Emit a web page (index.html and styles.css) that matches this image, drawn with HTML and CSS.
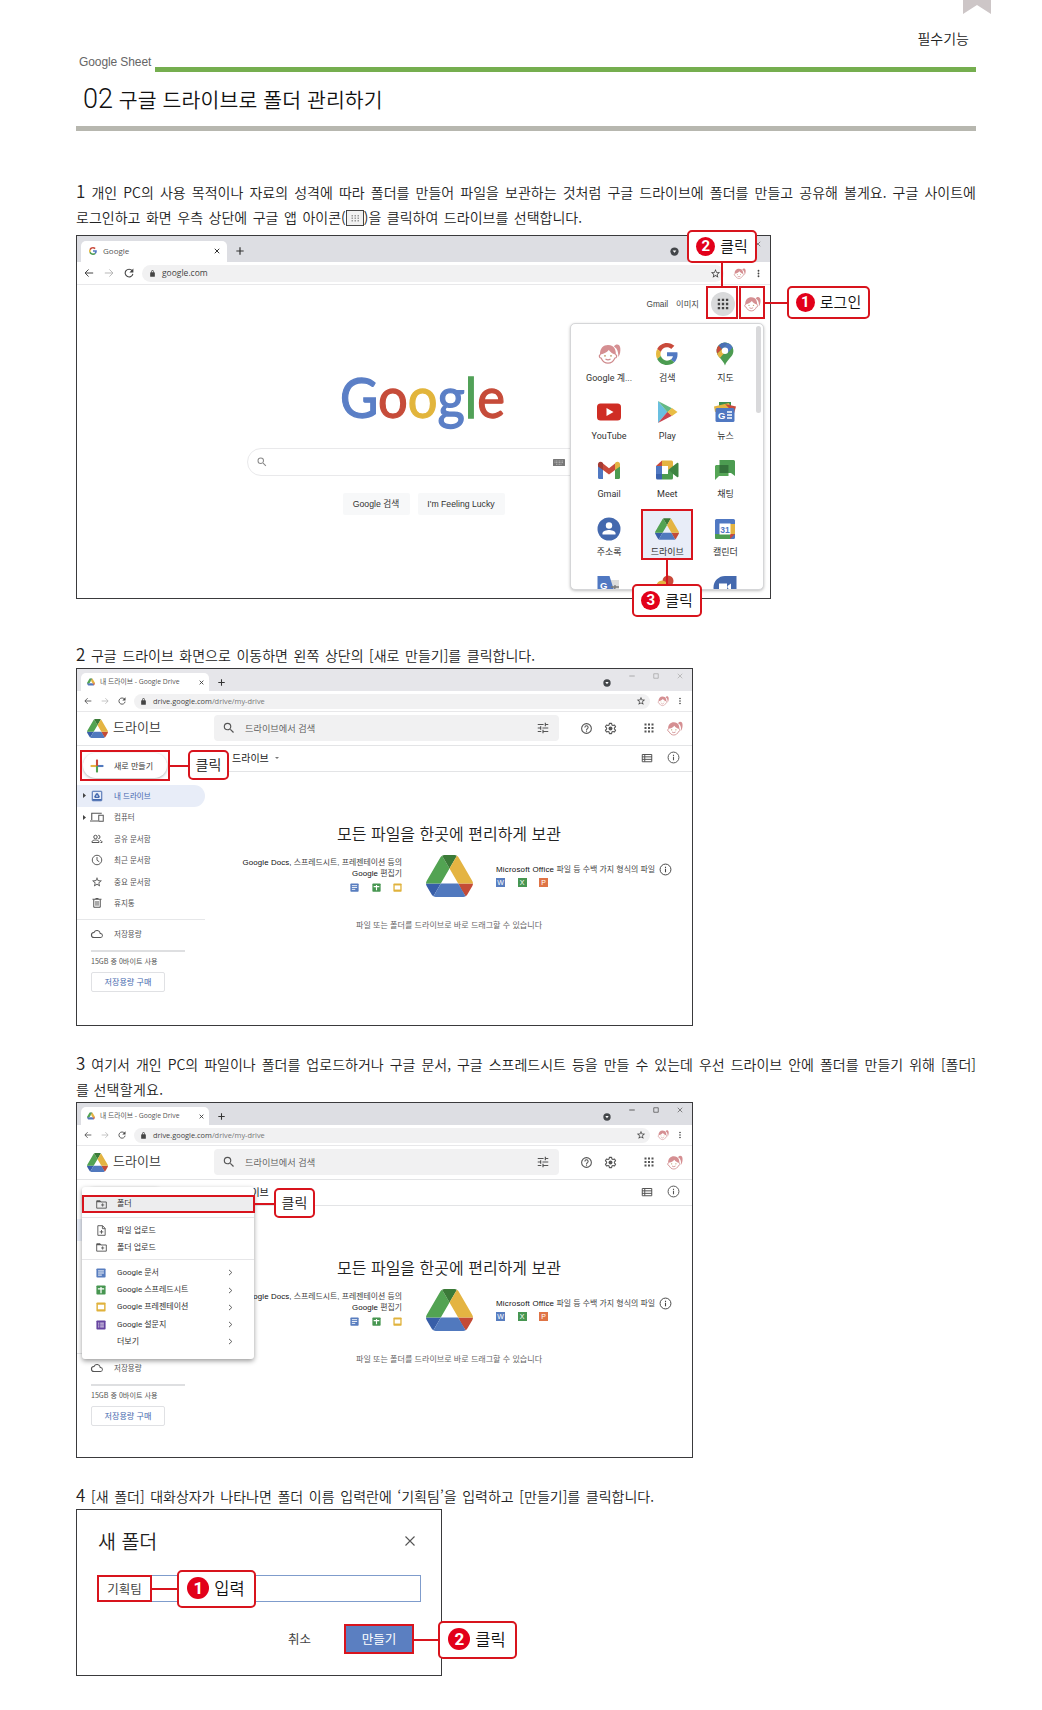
FILE: index.html
```html
<!DOCTYPE html>
<html lang="ko">
<head>
<meta charset="utf-8">
<title>02 구글 드라이브로 폴더 관리하기</title>
<link rel="stylesheet" href="styles.css">
</head>
<body>
<svg class="sprite" width="0" height="0" aria-hidden="true">
  <symbol id="back" viewBox="0 0 24 24"><path d="M22 12H3M11 3.500L2.500 12l8.500 8.500" fill="none" stroke="currentColor" stroke-width="2.400"/></symbol>
  <symbol id="fwd" viewBox="0 0 24 24"><path d="M2 12h19M13 3.500l8.500 8.500-8.500 8.500" fill="none" stroke="currentColor" stroke-width="2"/></symbol>
  <symbol id="reload" viewBox="0 0 24 24"><path d="M19.500 6.500A9.300 9.300 0 1 0 21.300 14" fill="none" stroke="currentColor" stroke-width="2.600"/><path d="M22.500 1v9.500H13z" fill="currentColor"/></symbol>
  <symbol id="lock" viewBox="0 0 24 24"><path d="M18 8h-1V6c0-2.760-2.240-5-5-5S7 3.240 7 6v2H6a2 2 0 0 0-2 2v11a2 2 0 0 0 2 2h12a2 2 0 0 0 2-2V10a2 2 0 0 0-2-2zM9 6a3 3 0 0 1 6 0v2H9z" fill="currentColor"/></symbol>
  <symbol id="star" viewBox="0 0 24 24"><path d="M22 9.240l-7.190-.62L12 2 9.190 8.630 2 9.240l5.460 4.730L5.820 21 12 17.270 18.180 21l-1.630-7.030L22 9.240zM12 15.400l-3.760 2.270 1-4.280-3.320-2.880 4.380-.38L12 6.100l1.710 4.040 4.380.38-3.320 2.880 1 4.280L12 15.400z" fill="currentColor"/></symbol>
  <symbol id="dots" viewBox="0 0 24 24"><path d="M12 8a2 2 0 1 0 0-4 2 2 0 0 0 0 4zm0 6a2 2 0 1 0 0-4 2 2 0 0 0 0 4zm0 6a2 2 0 1 0 0-4 2 2 0 0 0 0 4z" fill="currentColor"/></symbol>
  <symbol id="x" viewBox="0 0 24 24"><path d="M3 3l18 18M21 3L3 21" fill="none" stroke="currentColor" stroke-width="4"/></symbol>
  <symbol id="thinx" viewBox="0 0 24 24"><path d="M3 3l18 18M21 3L3 21" fill="none" stroke="currentColor" stroke-width="2.200"/></symbol>
  <symbol id="plus" viewBox="0 0 24 24"><path d="M12 1v22M1 12h22" fill="none" stroke="currentColor" stroke-width="3.600"/></symbol>
  <symbol id="min" viewBox="0 0 24 24"><path d="M1 12h22" stroke="currentColor" stroke-width="3"/></symbol>
  <symbol id="max" viewBox="0 0 24 24"><path d="M3 3h18v18H3z" fill="none" stroke="currentColor" stroke-width="2.500"/></symbol>
  <symbol id="incog" viewBox="0 0 24 24"><circle cx="12" cy="12" r="11" fill="#43464a"/><path d="M7 9h10l-5 6.500z" fill="#fff"/></symbol>
  <symbol id="search" viewBox="0 0 24 24"><path d="M15.500 14h-.79l-.28-.27A6.470 6.470 0 0 0 16 9.500 6.500 6.500 0 1 0 9.500 16c1.610 0 3.090-.59 4.230-1.570l.27.28v.79l5 4.990L20.490 19l-4.990-5zm-6 0a4.500 4.500 0 1 1 0-9 4.500 4.500 0 0 1 0 9z" fill="currentColor"/></symbol>
  <symbol id="tune" viewBox="0 0 24 24"><path d="M3 17v2h6v-2H3zM3 5v2h10V5H3zm10 16v-2h8v-2h-8v-2h-2v6h2zM7 9v2H3v2h4v2h2V9H7zm14 4v-2H11v2h10zm-6-4h2V7h4V5h-4V3h-2v6z" fill="currentColor"/></symbol>
  <symbol id="help" viewBox="0 0 24 24"><path d="M11 18h2v-2h-2v2zm1-16a10 10 0 1 0 0 20 10 10 0 0 0 0-20zm0 18a8 8 0 1 1 0-16 8 8 0 0 1 0 16zm0-14a4 4 0 0 0-4 4h2a2 2 0 1 1 4 0c0 2-3 1.750-3 5h2c0-2.250 3-2.500 3-5a4 4 0 0 0-4-4z" fill="currentColor"/></symbol>
  <symbol id="gear" viewBox="0 0 24 24"><path d="M10 2.500h4l.6 2.900 2 1.100 2.800-1 2 3.500-2.200 1.900v2.200l2.200 1.900-2 3.500-2.800-1-2 1.100-.6 2.900h-4l-.6-2.900-2-1.100-2.800 1-2-3.500 2.200-1.900v-2.200L2.600 9l2-3.500 2.800 1 2-1.100z" fill="none" stroke="currentColor" stroke-width="2" stroke-linejoin="round"/><circle cx="12" cy="12" r="3.600" fill="currentColor"/></symbol>
  <symbol id="grid" viewBox="0 0 24 24"><path d="M3 3h4v4H3zm7 0h4v4h-4zm7 0h4v4h-4zM3 10h4v4H3zm7 0h4v4h-4zm7 0h4v4h-4zM3 17h4v4H3zm7 0h4v4h-4zm7 0h4v4h-4z" fill="currentColor"/></symbol>
  <symbol id="list" viewBox="0 0 24 24"><path d="M2.500 5h19v14.500h-19zM2 9.700h20M2 14.700h20M7.500 5v14.500" fill="none" stroke="currentColor" stroke-width="2"/></symbol>
  <symbol id="info" viewBox="0 0 24 24"><circle cx="12" cy="12" r="10" fill="none" stroke="currentColor" stroke-width="1.800"/><path d="M11 10.500h2V17h-2zM11 7h2v2h-2z" fill="currentColor"/></symbol>
  <symbol id="girl" viewBox="0 0 24 24"><g fill="none" stroke="#cf8b8d" stroke-width="1.200"><path d="M3.800 12.500c-2 0-2.100 3.500.4 3.700C5.700 19.500 8 21.200 11 21.200s5.300-1.700 6.800-5c2.500-.2 2.400-3.700.4-3.700"/><path d="M8.500 17q2.500 1.800 5 0"/></g><path d="M3 12.500C2.800 6 6.500 3 11 3c3.500 0 5.500 1.500 6.500 3.300 1 2 1.500 4 1.300 6.500-3-.8-5.500-2.500-7-4.800-2 2.500-5.500 4-8.800 4.500z" fill="#d58f92"/><path d="M17 4.500c2-3 5.800-2.500 6.300 1.500.3 3-.1 6.500-2 9 .1-3.500-.4-6.500-2-8.500z" fill="#d58f92"/><circle cx="8" cy="13.800" r=".9" fill="#b96"/><circle cx="14" cy="13.800" r=".9" fill="#b96"/></symbol>
  <symbol id="g" viewBox="0 0 48 48"><path fill="#c94a3b" d="M24 9.500c3.540 0 6.710 1.220 9.210 3.600l6.850-6.850C35.900 2.380 30.470 0 24 0 14.620 0 6.510 5.380 2.560 13.220l7.980 6.190C12.430 13.720 17.740 9.500 24 9.500z"/><path fill="#5078c2" d="M46.980 24.550c0-1.570-.15-3.090-.38-4.550H24v9.020h12.940c-.58 2.960-2.260 5.480-4.780 7.180l7.730 6c4.510-4.180 7.090-10.360 7.090-17.650z"/><path fill="#e6b93f" d="M10.530 28.590c-.48-1.450-.76-2.990-.76-4.590s.27-3.140.76-4.590l-7.980-6.190C.92 16.460 0 20.120 0 24c0 3.880.92 7.540 2.560 10.780l7.970-6.190z"/><path fill="#4c9c51" d="M24 48c6.480 0 11.930-2.130 15.890-5.810l-7.730-6c-2.150 1.450-4.920 2.300-8.160 2.300-6.260 0-11.570-4.220-13.470-9.910l-7.980 6.190C6.510 42.620 14.620 48 24 48z"/></symbol>
  <symbol id="drive" viewBox="0 0 87.300 78"><path d="m6.600 66.850 3.850 6.650c.8 1.400 1.950 2.500 3.300 3.300l13.750-23.800h-27.500c0 1.550.4 3.100 1.200 4.500z" fill="#385ea8"/><path d="m43.650 25-13.750-23.800c-1.350.8-2.500 1.900-3.300 3.300l-25.400 44a9.060 9.060 0 0 0-1.200 4.500h27.500z" fill="#52a352"/><path d="m73.550 76.800c1.350-.8 2.500-1.900 3.300-3.300l1.600-2.750 7.650-13.250c.8-1.400 1.200-2.950 1.200-4.500h-27.500l5.850 11.500z" fill="#c44b37"/><path d="m43.650 25 13.750-23.800c-1.350-.8-2.900-1.200-4.500-1.200h-18.500c-1.600 0-3.150.45-4.500 1.200z" fill="#3b7a38"/><path d="m59.800 53h-32.300l-13.750 23.800c1.350.8 2.900 1.200 4.500 1.200h50.800c1.600 0 3.150-.45 4.500-1.200z" fill="#5179be"/><path d="m73.400 26.500-12.700-22c-.8-1.400-1.950-2.500-3.300-3.300l-13.750 23.800 16.150 28h27.450c0-1.550-.4-3.100-1.200-4.500z" fill="#e4b442"/></symbol>
  <symbol id="mydrive" viewBox="0 0 24 24"><rect x="2.500" y="2.500" width="19" height="19" rx="1" fill="none" stroke="currentColor" stroke-width="2"/><path d="M3 18h18v3H3z" fill="currentColor"/><path d="M10.200 6.500h3.600l4 6.800-1.700 2.700H7.900l-1.700-2.700z" fill="currentColor"/><circle cx="12" cy="12" r="1.700" fill="#e8edf8"/></symbol>
  <symbol id="computers" viewBox="0 0 28 24"><path d="M3.500 18V4.500h20M0 20h16" fill="none" stroke="currentColor" stroke-width="2.200"/><rect x="17.500" y="8.500" width="9" height="12" fill="none" stroke="currentColor" stroke-width="2"/></symbol>
  <symbol id="people" viewBox="0 0 24 24"><g fill="none" stroke="currentColor" stroke-width="2"><circle cx="9" cy="8" r="3.500"/><path d="M2 19v-1.500C2 15 6.500 14 9 14s7 1 7 3.500V19zM14.500 4.500a3.500 3.500 0 0 1 0 7M18 14.500c2 .7 4 1.800 4 3.500v1h-3"/></g></symbol>
  <symbol id="clock" viewBox="0 0 24 24"><circle cx="12" cy="12" r="9.500" fill="none" stroke="currentColor" stroke-width="1.900"/><path d="M12 6v6.500l4.500 3" fill="none" stroke="currentColor" stroke-width="1.900"/></symbol>
  <symbol id="trash" viewBox="0 0 24 24"><path d="M3 4.500h18M5.500 5v15.500h13V5M10 8v9.500M14 8v9.500" fill="none" stroke="currentColor" stroke-width="2"/><path d="M9 2h6v2H9z" fill="currentColor"/></symbol>
  <symbol id="cloud" viewBox="0 0 24 24"><path d="M19.350 10.040A7.490 7.490 0 0 0 5.350 8.040 5.990 5.990 0 0 0 6 20h13a5 5 0 0 0 .35-9.960zM19 18H6a4 4 0 0 1 0-8h.71a5.500 5.500 0 0 1 10.790 1.500v.5H19a3 3 0 0 1 0 6z" fill="currentColor"/></symbol>
  <symbol id="newplus" viewBox="0 0 24 24"><path d="M10.200 1h3.600v11h-3.600z" fill="#c94a3b"/><path d="M10.200 12h3.600v11h-3.600z" fill="#52a352"/><path d="M1 10.200h9.500v3.600H1z" fill="#e4b442"/><path d="M13.800 10.200H23v3.600h-9.200z" fill="#5179be"/></symbol>
  <symbol id="doc" viewBox="0 0 24 24"><rect x="1" y="1" width="22" height="22" rx="2" fill="#587dbf"/><path d="M5 7h14M5 12h14M5 17h9" stroke="#fff" stroke-width="2.300"/></symbol>
  <symbol id="sheet" viewBox="0 0 24 24"><rect x="1" y="1" width="22" height="22" rx="2" fill="#479651"/><path d="M4.500 9.500h15M12 5v14.500" stroke="#fff" stroke-width="3"/></symbol>
  <symbol id="slide" viewBox="0 0 24 24"><rect x="1" y="1" width="22" height="22" rx="2" fill="#e0b23c"/><path d="M4.500 6.500h15v11h-15z" fill="#fff"/></symbol>
  <symbol id="form" viewBox="0 0 24 24"><rect x="1" y="1" width="22" height="22" rx="2" fill="#6644a0"/><path d="M5 7.500h3M10 7.500h9M5 12h3M10 12h9M5 16.500h3M10 16.500h9" stroke="#fff" stroke-width="2"/></symbol>
  <symbol id="folder" viewBox="0 0 24 20"><path d="M1.500 3V18h21V4.500H11L9 2H1.500z" fill="none" stroke="currentColor" stroke-width="2"/><path d="M1.500 2h8l2 3h-10z" fill="currentColor"/><path d="M14.500 7.500v7M11 11h7" stroke="currentColor" stroke-width="1.900"/></symbol>
  <symbol id="file" viewBox="0 0 20 24"><path d="M2 1.500h10.500l5.500 6V22.500H2zM12 2v6h6M10 11v8M6 15h8" fill="none" stroke="currentColor" stroke-width="2"/></symbol>
  <symbol id="chev" viewBox="0 0 24 24"><path d="M8 5l7.500 7L8 19" fill="none" stroke="currentColor" stroke-width="2.500"/></symbol>
  <symbol id="tri" viewBox="0 0 10 10"><path d="M2 0l6 5-6 5z" fill="currentColor"/></symbol>
</svg>

<main class="page">
  <svg class="bookmark" viewBox="0 0 28 14"><path d="M0 0h28v14L14 5 0 14z" fill="#cdc6c7"/></svg>
  <header class="head">
    <div class="head-cat">필수기능</div>
    <div class="head-row"><span class="head-brand">Google Sheet</span><span class="head-bar"></span></div>
    <h1 class="title"><span class="title-num">02</span> 구글 드라이브로 폴더 관리하기</h1>
  </header>

  <section class="step step-1">
    <p class="line line-full"><b>1</b> 개인 PC의 사용 목적이나 자료의 성격에 따라 폴더를 만들어 파일을 보관하는 것처럼 구글 드라이브에 폴더를 만들고 공유해 볼게요. 구글 사이트에</p>
    <p class="line line-1b">로그인하고 화면 우측 상단에 구글 앱 아이콘(<svg class="inline-apps" viewBox="0 0 18 16"><rect x=".5" y=".5" width="17" height="15" fill="#f1f1f1" stroke="#444"/><path d="M5.500 5h1.500v1.500H5.500zm3 0H10v1.500H8.500zm3 0H13v1.500h-1.500zM5.500 7.500h1.500V9H5.500zm3 0H10V9H8.500zm3 0H13V9h-1.500zM5.500 10h1.500v1.500H5.500zm3 0H10v1.500H8.500zm3 0H13v1.500h-1.500z" fill="#999"/></svg>)을 클릭하여 드라이브를 선택합니다.</p>
    <div class="shot shot-google">
      <div class="tabs">
        <div class="tab"><svg class="i8"><use href="#g"/></svg><span class="tab-text">Google</span><svg class="i6"><use href="#x"/></svg></div>
        <svg class="i8 newtab"><use href="#plus"/></svg>
        <svg class="i9 incog"><use href="#incog"/></svg>
        <div class="winctl"><svg class="i6"><use href="#thinx"/></svg></div>
      </div>
      <div class="bar">
        <svg class="nav"><use href="#back"/></svg><svg class="nav dim"><use href="#fwd"/></svg><svg class="nav"><use href="#reload"/></svg>
        <div class="url"><svg class="lock"><use href="#lock"/></svg><span>google.com</span><svg class="urlstar"><use href="#star"/></svg></div>
        <svg class="face-s"><use href="#girl"/></svg><svg class="kebab"><use href="#dots"/></svg>
      </div>
      <div class="gpage">
        <div class="gtop"><span>Gmail</span><span>이미지</span><span class="appsbtn"><svg class="i14"><use href="#grid"/></svg></span><svg class="face-m"><use href="#girl"/></svg></div>
        <div class="gmain">
          <svg class="glogo" viewBox="0 0 170 66"><text x="1" y="47" textLength="165" lengthAdjust="spacingAndGlyphs"><tspan class="lb">G</tspan><tspan class="lr">o</tspan><tspan class="ly">o</tspan><tspan class="lb">g</tspan><tspan class="lg">l</tspan><tspan class="lr">e</tspan></text></svg>
          <div class="gsearch"><svg class="i12"><use href="#search"/></svg><svg class="kbd" viewBox="0 0 12 7"><rect width="12" height="7" rx=".5" fill="#777"/><path d="M1.500 2h9M1.500 3.600h9M3 5.300h6" stroke="#ccc" stroke-width=".7" stroke-dasharray="1 .5"/></svg></div>
          <div class="gbtns"><span>Google 검색</span><span>I'm Feeling Lucky</span></div>
        </div>
      </div>
      <div class="apps">
        <div class="apps-grid">
          <div class="app"><svg class="i24"><use href="#girl"/></svg><span>Google 계...</span></div>
          <div class="app"><svg class="i22"><use href="#g"/></svg><span>검색</span></div>
          <div class="app"><svg class="i24" viewBox="0 0 24 24"><path d="M12 .5c4.700 0 8.400 3.700 8.400 8.400 0 6-6.400 8-8.400 14.600-2-6.600-8.400-8.600-8.400-14.600C3.600 4.200 7.300.5 12 .5z" fill="#4c9c51"/><path d="M5.500 3.500A8.400 8.400 0 0 1 14.500.9L8.900 7.300z" fill="#4a6fb5"/><path d="M5.500 3.500a8.400 8.400 0 0 0-1.400 8.200l4.800-4.400z" fill="#c94a3b"/><path d="M4.100 11.700c.6 1.800 1.700 3 2.800 4.400l7.500-8.700-5.500-.1z" fill="#e4b442"/><path d="M14.500.9c2.500.8 4.300 2.500 5.200 4.700l-5.500 6L9 7.300z" fill="#5078c2"/><circle cx="12" cy="8.800" r="3.200" fill="#fff"/></svg><span>지도</span></div>
          <div class="app"><svg class="i24" viewBox="0 0 24 24"><rect y="3.500" width="24" height="17" rx="3.500" fill="#cf2d24"/><path d="M9.500 8l7 4-7 4z" fill="#fff"/></svg><span>YouTube</span></div>
          <div class="app"><svg class="i24" viewBox="0 0 24 24"><path d="M3 1v22l9.500-11z" fill="#69bfe0"/><path d="M3 1l14 7.300-4.500 4z" fill="#64b984"/><path d="M3 23l14-7.300-4.500-4z" fill="#c8434d"/><path d="M17 8.100l5.500 3.900-5.500 3.900-4.700-3.900z" fill="#e9bd45"/></svg><span>Play</span></div>
          <div class="app"><svg class="i24" viewBox="0 0 24 24"><path d="M6 2h12v6H6z" fill="#3f8e4d"/><path d="M1 6.500L16 3l2 6-16 3z" fill="#e4b442"/><path d="M12 4l11 2.500-2 7z" fill="#c94a3b"/><rect x="2.500" y="8" width="19" height="14" rx="1.500" fill="#5078c2"/><text x="5" y="18.500" class="icon-letter">G</text><path d="M14 12h5M14 15h5M14 18h5" stroke="#fff" stroke-width="1.500"/></svg><span>뉴스</span></div>
          <div class="app"><svg class="i24" viewBox="0 0 24 24"><path d="M1 7h5v14H2.500A1.500 1.500 0 0 1 1 19.500z" fill="#5078c2"/><path d="M18 7h5v12.500a1.500 1.500 0 0 1-1.500 1.500H18z" fill="#4c9c51"/><path d="M6 12V5.500l6 4.700 6-4.700V12l-6 4.500z" fill="#c94a3b"/><path d="M1 6.500C1 3.500 4 3 6 5v7L1 8.500z" fill="#a53a32"/><path d="M23 6.500c0-3-3-3.500-5-1.500v7l5-3.500z" fill="#e4b442"/></svg><span>Gmail</span></div>
          <div class="app"><svg class="i24" viewBox="0 0 24 24"><path d="M1 8l6-5.500V8z" fill="#c94a3b"/><path d="M7 2.500h9.500A1.500 1.500 0 0 1 18 4v5l-5 3V8H7z" fill="#e4b442"/><path d="M1 8h6v8H1z" fill="#5078c2"/><path d="M1 16h6v5.500H2.500A1.500 1.500 0 0 1 1 20z" fill="#3a62ad"/><path d="M7 16h6v-4l5 3v5a1.500 1.500 0 0 1-1.500 1.500H7z" fill="#4c9c51"/><path d="M13 12l9-7c.8-.5 1.500 0 1.500.7v12.600c0 .8-.8 1.200-1.500.7z" fill="#3d8442"/></svg><span>Meet</span></div>
          <div class="app"><svg class="i24" viewBox="0 0 24 24"><path d="M6.500 2h14A1.500 1.500 0 0 1 22 3.500V18l-4-3H6.500z" fill="#4c9c51"/><path d="M3 7h12.500v11H6l-4 4V8z" fill="#55a556"/><path d="M6.500 7h9v8h-9z" fill="#35733c"/></svg><span>채팅</span></div>
          <div class="app"><svg class="i24" viewBox="0 0 24 24"><circle cx="12" cy="12" r="11.500" fill="#4469ae"/><circle cx="12" cy="8.500" r="3.200" fill="#fff"/><path d="M5.500 17.500v-1.300c0-2.200 4.300-3.200 6.500-3.200s6.500 1 6.500 3.200v1.300z" fill="#fff"/></svg><span>주소록</span></div>
          <div class="app app-on"><svg class="i24"><use href="#drive"/></svg><span>드라이브</span></div>
          <div class="app"><svg class="i24" viewBox="0 0 24 24"><rect x="2" y="2" width="20" height="20" rx="1.500" fill="#5078c2"/><path d="M17 7h5v10h-5z" fill="#e4b442"/><path d="M2 17h15v5H3.500A1.500 1.500 0 0 1 2 20.500z" fill="#4c9c51"/><path d="M17 17h5l-5 5z" fill="#c94a3b"/><path d="M6.500 6.500h11v11h-11z" fill="#fff"/><text x="7.300" y="15.500" class="icon-num">31</text></svg><span>캘린더</span></div>
          <div class="app"><svg class="i24" viewBox="0 0 24 24"><path d="M10 5h12v19H10z" fill="#dcdcdc"/><path d="M.5 1h12l6 19H.5z" fill="#5078c2"/><text x="3" y="13.500" class="icon-letter">G</text><path d="M14 12h8M18 10v2c0 3-2 5-4 6" fill="none" stroke="#777" stroke-width="1.300"/></svg></div>
          <div class="app"><svg class="i24" viewBox="0 0 24 24"><circle cx="13" cy="6" r="5.500" fill="#c94a3b"/><circle cx="7" cy="11" r="5.500" fill="#e4b442"/></svg></div>
          <div class="app"><svg class="i24" viewBox="0 0 24 24"><path d="M12 1h11.500v13A10 10 0 0 1 12 24 11.500 11.500 0 0 1 12 1z" fill="#4469ae"/><path d="M6 8.500h8v7H6zM14.500 11l3.500-2.500v7L14.500 13z" fill="#fff"/></svg></div>
        </div>
        <span class="thumb"></span>
      </div>
      <span class="frame f-apps"></span><span class="frame f-face"></span><span class="frame f-drive"></span>
      <span class="wire w-2"></span><span class="wire w-1"></span><span class="wire w-3"></span>
      <span class="note n-2"><i>2</i>클릭</span>
      <span class="note n-1"><i>1</i>로그인</span>
      <span class="note n-3"><i>3</i>클릭</span>
    </div>
  </section>

  <section class="step step-2">
    <p class="line line-2"><b>2</b> 구글 드라이브 화면으로 이동하면 왼쪽 상단의 [새로 만들기]를 클릭합니다.</p>
    <div class="shot shot-drive faded">
      <div class="tabs">
        <div class="tab"><svg class="i8"><use href="#drive"/></svg><span class="tab-text">내 드라이브 - Google Drive</span><svg class="i5"><use href="#x"/></svg></div>
        <svg class="i7 newtab"><use href="#plus"/></svg>
        <svg class="i8 incog"><use href="#incog"/></svg>
        <div class="winctl"><svg class="i6"><use href="#min"/></svg><svg class="i6"><use href="#max"/></svg><svg class="i6"><use href="#thinx"/></svg></div>
      </div>
      <div class="bar">
        <svg class="nav"><use href="#back"/></svg><svg class="nav dim"><use href="#fwd"/></svg><svg class="nav"><use href="#reload"/></svg>
        <div class="url"><svg class="lock"><use href="#lock"/></svg><span>drive.google.com<em>/drive/my-drive</em></span><svg class="urlstar"><use href="#star"/></svg></div>
        <svg class="face-s"><use href="#girl"/></svg><svg class="kebab"><use href="#dots"/></svg>
      </div>
      <div class="dhead">
        <svg class="dlogo"><use href="#drive"/></svg><span class="dname">드라이브</span>
        <div class="dsearch"><svg class="i14"><use href="#search"/></svg><span>드라이브에서 검색</span><svg class="i14 tune"><use href="#tune"/></svg></div>
        <svg class="i13 h-help"><use href="#help"/></svg><svg class="i13 h-gear"><use href="#gear"/></svg><svg class="i12 h-grid"><use href="#grid"/></svg><svg class="face-l"><use href="#girl"/></svg>
      </div>
      <div class="dbody">
        <aside class="side">
          <div class="new"><svg class="i14"><use href="#newplus"/></svg><span>새로 만들기</span></div>
          <ul class="menu">
            <li class="on"><svg class="tri"><use href="#tri"/></svg><svg class="mi"><use href="#mydrive"/></svg><span>내 드라이브</span></li>
            <li><svg class="tri"><use href="#tri"/></svg><svg class="mi wide"><use href="#computers"/></svg><span>컴퓨터</span></li>
            <li><svg class="mi"><use href="#people"/></svg><span>공유 문서함</span></li>
            <li><svg class="mi"><use href="#clock"/></svg><span>최근 문서함</span></li>
            <li><svg class="mi"><use href="#star"/></svg><span>중요 문서함</span></li>
            <li><svg class="mi"><use href="#trash"/></svg><span>휴지통</span></li>
          </ul>
          <div class="quota">
            <div class="quota-row"><svg class="mi wide"><use href="#cloud"/></svg><span>저장용량</span></div>
            <div class="quota-bar"></div>
            <div class="quota-text">15GB 중 0바이트 사용</div>
            <div class="buy">저장용량 구매</div>
          </div>
        </aside>
        <div class="dmain">
          <div class="crumb"><span>내 드라이브</span><i class="caret"></i><svg class="i12 c-list"><use href="#list"/></svg><svg class="i13"><use href="#info"/></svg></div>
          <h2 class="hero">모든 파일을 한곳에 편리하게 보관</h2>
          <div class="trio">
            <div class="left"><b>Google Docs,</b> 스프레드시트, 프레젠테이션 등의<br><b>Google</b> 편집기<div class="apps3"><svg><use href="#doc"/></svg><svg><use href="#sheet"/></svg><svg><use href="#slide"/></svg></div></div>
            <svg class="biglogo"><use href="#drive"/></svg>
            <div class="right"><div class="right-row"><span><b>Microsoft Office</b> 파일 등 수백 가지 형식의 파일</span><svg class="i13"><use href="#info"/></svg></div><div class="apps3"><span class="w">W</span><span class="xl">X</span><span class="pp">P</span></div></div>
          </div>
          <p class="drag">파일 또는 폴더를 드라이브로 바로 드래그할 수 있습니다</p>
        </div>
      </div>
      <span class="frame f-new"></span><span class="wire w-new"></span><span class="note small n-new">클릭</span>
    </div>
  </section>

  <section class="step step-3">
    <p class="line line-full"><b>3</b> 여기서 개인 PC의 파일이나 폴더를 업로드하거나 구글 문서, 구글 스프레드시트 등을 만들 수 있는데 우선 드라이브 안에 폴더를 만들기 위해 [폴더]</p>
    <p class="line line-3b">를 선택할게요.</p>
    <div class="shot shot-drive">
      <div class="tabs">
        <div class="tab"><svg class="i8"><use href="#drive"/></svg><span class="tab-text">내 드라이브 - Google Drive</span><svg class="i5"><use href="#x"/></svg></div>
        <svg class="i7 newtab"><use href="#plus"/></svg>
        <svg class="i8 incog"><use href="#incog"/></svg>
        <div class="winctl"><svg class="i6"><use href="#min"/></svg><svg class="i6"><use href="#max"/></svg><svg class="i6"><use href="#thinx"/></svg></div>
      </div>
      <div class="bar">
        <svg class="nav"><use href="#back"/></svg><svg class="nav dim"><use href="#fwd"/></svg><svg class="nav"><use href="#reload"/></svg>
        <div class="url"><svg class="lock"><use href="#lock"/></svg><span>drive.google.com<em>/drive/my-drive</em></span><svg class="urlstar"><use href="#star"/></svg></div>
        <svg class="face-s"><use href="#girl"/></svg><svg class="kebab"><use href="#dots"/></svg>
      </div>
      <div class="dhead">
        <svg class="dlogo"><use href="#drive"/></svg><span class="dname">드라이브</span>
        <div class="dsearch"><svg class="i14"><use href="#search"/></svg><span>드라이브에서 검색</span><svg class="i14 tune"><use href="#tune"/></svg></div>
        <svg class="i13 h-help"><use href="#help"/></svg><svg class="i13 h-gear"><use href="#gear"/></svg><svg class="i12 h-grid"><use href="#grid"/></svg><svg class="face-l"><use href="#girl"/></svg>
      </div>
      <div class="dbody">
        <aside class="side">
          <div class="new"></div>
          <ul class="menu"><li class="on"></li><li></li><li></li><li></li><li></li><li></li></ul>
          <div class="quota">
            <div class="quota-row"><svg class="mi wide"><use href="#cloud"/></svg><span>저장용량</span></div>
            <div class="quota-bar"></div>
            <div class="quota-text">15GB 중 0바이트 사용</div>
            <div class="buy">저장용량 구매</div>
          </div>
        </aside>
        <div class="dmain">
          <div class="crumb"><span>내 드라이브</span><svg class="i12 c-list"><use href="#list"/></svg><svg class="i13"><use href="#info"/></svg></div>
          <h2 class="hero">모든 파일을 한곳에 편리하게 보관</h2>
          <div class="trio">
            <div class="left"><b>Google Docs,</b> 스프레드시트, 프레젠테이션 등의<br><b>Google</b> 편집기<div class="apps3"><svg><use href="#doc"/></svg><svg><use href="#sheet"/></svg><svg><use href="#slide"/></svg></div></div>
            <svg class="biglogo"><use href="#drive"/></svg>
            <div class="right"><div class="right-row"><span><b>Microsoft Office</b> 파일 등 수백 가지 형식의 파일</span><svg class="i13"><use href="#info"/></svg></div><div class="apps3"><span class="w">W</span><span class="xl">X</span><span class="pp">P</span></div></div>
          </div>
          <p class="drag">파일 또는 폴더를 드라이브로 바로 드래그할 수 있습니다</p>
        </div>
      </div>
      <ul class="popup">
        <li class="hot"><svg class="pi"><use href="#folder"/></svg><span>폴더</span></li>
        <li class="sep"></li>
        <li><svg class="pi"><use href="#file"/></svg><span>파일 업로드</span></li>
        <li><svg class="pi"><use href="#folder"/></svg><span>폴더 업로드</span></li>
        <li class="sep"></li>
        <li><svg class="pi sq"><use href="#doc"/></svg><span>Google 문서</span><svg class="chev"><use href="#chev"/></svg></li>
        <li><svg class="pi sq"><use href="#sheet"/></svg><span>Google 스프레드시트</span><svg class="chev"><use href="#chev"/></svg></li>
        <li><svg class="pi sq"><use href="#slide"/></svg><span>Google 프레젠테이션</span><svg class="chev"><use href="#chev"/></svg></li>
        <li><svg class="pi sq"><use href="#form"/></svg><span>Google 설문지</span><svg class="chev"><use href="#chev"/></svg></li>
        <li><i class="pi"></i><span>더보기</span><svg class="chev"><use href="#chev"/></svg></li>
      </ul>
      <span class="frame f-folder"></span><span class="wire w-folder"></span><span class="note small n-folder">클릭</span>
    </div>
  </section>

  <section class="step step-4">
    <p class="line line-4"><b>4</b> [새 폴더] 대화상자가 나타나면 폴더 이름 입력란에 ‘기획팀’을 입력하고 [만들기]를 클릭합니다.</p>
    <div class="shot dialog">
      <div class="dlg-head"><span>새 폴더</span><svg class="i12"><use href="#thinx"/></svg></div>
      <div class="dlg-input"><span class="dlg-value">기획팀</span></div>
      <div class="dlg-foot"><span class="cancel">취소</span><span class="make">만들기</span></div>
      <span class="wire w-in"></span><span class="wire w-make"></span>
      <span class="note tall n-in"><i>1</i>입력</span>
      <span class="note tall n-make"><i>2</i>클릭</span>
    </div>
  </section>
</main>
</body>
</html>
```
FILE: styles.css
```css
* { box-sizing: border-box; margin: 0; padding: 0; }
html, body { background: #fff; }
body { font-family: "Liberation Sans", "Noto Sans CJK KR", sans-serif; color: #333; }
svg { display: block; flex: none; }
ul { list-style: none; }
i, em { font-style: normal; }

.sprite { position: absolute; }
.page { position: relative; width: 1042px; height: 1710px; padding: 0 66px 0 76px; }
.bookmark { position: absolute; left: 963px; top: 0; width: 28px; height: 14px; }

/* Header */
.head-cat { padding: 28px 7px 0 0; height: 50px; text-align: right; font: 350 14px/20px "Noto Sans CJK KR", sans-serif; color: #222; }
.head-row { display: flex; height: 22px; padding-left: 3px; align-items: flex-end; }
.head-brand { width: 76px; font-size: 12px; line-height: 20px; letter-spacing: -0.100px; color: #666; }
.head-bar { flex: 1; height: 5px; background: #75ae4f; }
.title { height: 59px; padding-left: 7px; border-bottom: 5px solid #b7b7af; font: 350 20.500px/55px "Noto Sans CJK KR", sans-serif; letter-spacing: 0.100px; color: #111; }
.title-num { font: 300 27px/40px "Roboto", sans-serif; letter-spacing: 0; }

/* Steps */
.step-1 { margin-top: 49px; }
.step-2 { margin-top: 44px; }
.step-3 { margin-top: 26px; }
.step-4 { margin-top: 26px; }
.line { height: 25px; font: 350 14px/24px "Noto Sans CJK KR", sans-serif; white-space: nowrap; color: #222; text-align-last: left; }
.line b { font: 350 17px/20px "Noto Sans CJK KR", sans-serif; }
.line-full { width: 900px; white-space: normal; text-align-last: justify; }
.line-1b { width: 506px; white-space: normal; text-align-last: justify; }
.line-2 { width: 459px; white-space: normal; text-align-last: justify; }
.line-3b { letter-spacing: 0.300px; }
.line-4 { width: 578px; white-space: normal; text-align-last: justify; }
.inline-apps { display: inline-block; width: 18px; height: 16px; vertical-align: -3px; }
.step-1 .shot { margin-top: 5px; }

.shot { position: relative; display: flex; flex-direction: column; border: 1px solid #3a3a3c; background: #fff; }
.shot-google { width: 695px; height: 364px; }
.shot-drive { width: 617px; height: 356px; }
.shot-drive.faded { height: 358px; }

/* Icon sizes */
.i5 { width: 5px; height: 5px; } .i6 { width: 6px; height: 6px; } .i7 { width: 7px; height: 7px; }
.i8 { width: 8px; height: 8px; } .i9 { width: 9px; height: 9px; } .i12 { width: 12px; height: 12px; }
.i13 { width: 13px; height: 13px; } .i14 { width: 14px; height: 14px; }
.i22 { width: 22px; height: 22px; } .i24 { width: 24px; height: 24px; }

/* Browser frame */
.tabs { display: flex; height: 26px; padding: 5px 0 0 4px; background: #dddee3; color: #333; }
.tab { display: flex; align-items: center; width: 146px; padding: 0 7px 1px 8px; background: #fff; border-radius: 5px 5px 0 0; }
.tab-text { flex: 1; padding-left: 6px; font: 8px/12px "Open Sans", "Noto Sans CJK KR", sans-serif; color: #555; white-space: nowrap; }
.newtab { margin: 6px 0 0 9px; }
.incog { margin: 6px 0 0 auto; }
.winctl { display: flex; width: 91px; padding-right: 9px; justify-content: flex-end; }
.bar { display: flex; align-items: center; height: 23px; padding: 0 6px 0 7px; gap: 10px; border-bottom: 1px solid #e8e8ea; color: #444; }
.nav { width: 10px; height: 10px; }
.dim { color: #aaa; }
.url { display: flex; align-items: center; flex: 1; height: 17px; margin: 0 0 0 -2px; padding: 0 3px 0 7px; border-radius: 9px; background: #f1f1f2; font: 8.500px/12px "Open Sans", sans-serif; color: #444; }
.url span { flex: 1; padding-left: 6px; }
.url em { color: #777; }
.lock { width: 7px; height: 7px; }
.urlstar { width: 11px; height: 11px; }
.face-s { width: 13px; height: 13px; margin-left: -1px; }
.kebab { width: 11px; height: 11px; margin-left: -3px; }

/* Search page */
.gtop { display: flex; align-items: center; justify-content: flex-end; height: 37px; padding-right: 9px; font: 8.300px/12px "Liberation Sans", "Noto Sans CJK KR", sans-serif; color: #444; }
.gtop span:nth-child(2) { margin-left: 8px; }
.gtop .appsbtn { display: flex; align-items: center; justify-content: center; width: 24px; height: 24px; margin: 0 8px 0 12px; border-radius: 50%; background: #d9dadb; }
.face-m { width: 18px; height: 18px; }
.gmain { display: flex; flex-direction: column; align-items: center; }
.glogo { width: 170px; height: 66px; margin-top: 49px; overflow: visible; font: 400 57px "Lato", sans-serif; stroke-width: 1.300px; }
.lb { fill: #5b7fc6; stroke: #5b7fc6; }
.lr { fill: #c64c3a; stroke: #c64c3a; }
.ly { fill: #e2b53c; stroke: #e2b53c; }
.lg { fill: #52a158; stroke: #52a158; }
.gsearch { display: flex; align-items: center; width: 354px; height: 28px; margin-top: 11px; padding: 0 35px 0 8px; justify-content: space-between; border: 1px solid #e9e9eb; border-radius: 14px; color: #888; }
.kbd { width: 12px; height: 7px; }
.gbtns { display: flex; gap: 8px; margin-top: 17px; }
.gbtns span { height: 22px; width: 67px; text-align: center; border-radius: 2px; background: #f7f8f9; font: 8.700px/22px "Liberation Sans", "Noto Sans CJK KR", sans-serif; color: #333; white-space: nowrap; }
.gbtns span + span { width: 87px; }

.apps { position: absolute; left: 493px; top: 87px; width: 194px; height: 267px; padding: 11px 9px; overflow: hidden; border: 1px solid #d5d6d8; border-radius: 5px; background: #fff; box-shadow: 0 1px 3px rgba(0,0,0,.25); }
.apps-grid { display: grid; grid-template-columns: repeat(3, 58.200px); grid-auto-rows: 58.200px; }
.app { display: flex; flex-direction: column; align-items: center; padding-top: 7px; font: 9px/13px "Roboto", "Noto Sans CJK KR", sans-serif; color: #333; white-space: nowrap; }
.app svg { height: 24px; }
.app span { margin-top: 5.500px; }
.app-on { background: linear-gradient(#e8edf8, #e8edf8) 50% 0 / 49px 50px no-repeat; }
.thumb { position: absolute; right: 2px; top: 2px; width: 5px; height: 87px; border-radius: 3px; background: #d9d9db; }
.icon-letter { font: 700 9.500px "Liberation Sans", sans-serif; fill: #fff; }
.icon-num { font: 700 8.500px "Liberation Sans", sans-serif; fill: #5078c2; }

/* Annotations */
.frame { position: absolute; border: 2px solid #d8141d; }
.wire { position: absolute; height: 2px; background: #d8141d; }
.note { position: absolute; display: flex; align-items: center; justify-content: center; gap: 5px; height: 33px; padding-bottom: 1px; border: 2px solid #d8141d; border-radius: 5px; background: #fff; font: 350 15px/20px "Noto Sans CJK KR", sans-serif; color: #111; white-space: nowrap; }
.note i { width: 19px; height: 19px; border-radius: 50%; background: #e2001a; color: #fff; font: 700 15px/19px "Roboto", sans-serif; text-align: center; }
.note.small { width: 41px; height: 30px; font-size: 14px; padding-bottom: 2px; }
.note.tall { height: 38px; font-size: 16.500px; padding-bottom: 2px; padding-right: 1px; }
.note.tall i { width: 22px; height: 22px; font-size: 17px; line-height: 22px; }
.f-apps { left: 629px; top: 50px; width: 32px; height: 33px; }
.f-face { left: 662px; top: 50px; width: 26px; height: 33px; }
.f-drive { left: 564px; top: 273px; width: 52px; height: 51px; }
.w-2 { left: 644px; top: 26px; width: 2px; height: 26px; }
.w-1 { left: 688px; top: 66px; width: 24px; }
.w-3 { left: 589px; top: 324px; width: 2px; height: 25px; }
.n-2 { left: 610px; top: -6px; width: 70px; }
.n-1 { left: 710px; top: 50px; width: 83px; }
.n-3 { left: 555px; top: 348px; width: 70px; }

/* Drive window */
.shot-drive .tabs { height: 22px; padding-top: 4px; }
.shot-drive.faded .tabs { background: #e6e6ea; }
.shot-drive .tab { width: 128px; padding: 0 5px 0 6px; }
.shot-drive .tab-text { padding-left: 5px; font-size: 6.800px; line-height: 10px; }
.shot-drive .newtab { margin-left: 9px; }
.shot-drive .winctl { width: 81px; padding: 0 9px 0 0; gap: 18px; }
.faded .winctl { color: #999; }
.shot-drive .bar { height: 21px; padding: 0 7px 0 7px; gap: 9px; }
.shot-drive .nav { width: 8px; height: 8px; }
.shot-drive .url { height: 15px; margin-left: -1px; padding: 0 4px 0 6px; font-size: 7.400px; }
.shot-drive .url span { padding-left: 6px; }
.shot-drive .lock { width: 7px; height: 7px; }
.shot-drive .urlstar { width: 10px; height: 10px; }
.shot-drive .face-s { width: 12px; height: 12px; margin-left: -2px; }
.shot-drive .kebab { margin-left: -3px; width: 10px; height: 10px; }
.dhead { display: flex; align-items: center; height: 34px; padding: 0 0 1px 10px; border-bottom: 1px solid #e3e4e6; color: #555; }
.dlogo { width: 21px; height: 19px; }
.dname { width: 106px; padding: 0 0 2px 5px; font: 350 13px/20px "Noto Sans CJK KR", sans-serif; color: #333; }
.dsearch { display: flex; align-items: center; width: 345px; height: 26px; padding: 0 9px 0 8px; border-radius: 4px; background: #f1f1f2; font: 350 9.200px/14px "Noto Sans CJK KR", sans-serif; color: #555; }
.dsearch span { flex: 1; padding-left: 9px; }
.h-help { margin-left: 21px; }
.h-gear { margin-left: 11px; }
.h-grid { margin-left: 26px; }
.face-l { width: 17px; height: 17px; margin-left: 11px; }
.dbody { display: flex; flex: 1; }
.side { width: 128px; }
.new { display: flex; align-items: center; width: 84px; height: 25px; margin: 7px 0 0 6px; padding-left: 7px; gap: 10px; border-radius: 13px; box-shadow: 0 1px 3px rgba(0,0,0,.3); font: 400 8px/12px "Noto Sans CJK KR", sans-serif; white-space: nowrap; }
.menu { margin-top: 7px; }
.menu li { display: flex; align-items: center; height: 21.500px; padding-left: 14px; font: 400 7.500px/12px "Noto Sans CJK KR", sans-serif; color: #555; }
.menu li.on { border-radius: 0 11px 11px 0; background: #e8edf8; color: #3f63ad; }
.menu .tri { width: 5px; height: 5px; margin: 0 4px 0 -9px; color: #444; }
.mi { width: 12px; height: 12px; margin-right: 11px; color: #555; }
.on .mi { color: #4469ae; }
.mi.wide { width: 14px; margin-left: -1px; margin-right: 10px; }
.quota { margin-top: 5px; padding: 7px 0 0 14px; border-top: 1px solid #e6e7e9; font: 400 7.500px/12px "Noto Sans CJK KR", sans-serif; color: #555; }
.quota-row { display: flex; height: 14px; align-items: center; }
.quota-bar { width: 94px; height: 2px; margin-top: 9px; background: #dedfe1; }
.quota-text { margin-top: 3px; font-size: 7.100px; white-space: nowrap; }
.buy { width: 74px; height: 20px; margin-top: 5px; border: 1px solid #e0e1e4; border-radius: 2px; text-align: center; font-size: 8.100px; line-height: 17px; color: #4469ae; }
.dmain { flex: 1; min-width: 0; }
.crumb { display: flex; align-items: center; height: 26px; padding: 0 12px 2px 15px; border-bottom: 1px solid #e3e4e6; font: 400 10px/14px "Noto Sans CJK KR", sans-serif; color: #222; }
.caret { width: 0; margin-left: 6px; border: 2.500px solid transparent; border-top-color: #777; border-bottom: 0; }
.c-list { margin-left: auto; margin-right: 14px; }
.crumb svg { color: #555; }
.hero { padding-left: 132px; margin-top: 49px; font: 350 16px/25px "Noto Sans CJK KR", sans-serif; color: #222; white-space: nowrap; }
.trio { display: flex; height: 44px; margin-top: 8px; }
.left { width: 197px; text-align: right; font: 400 7.900px/10.800px "Liberation Sans", "Noto Sans CJK KR", sans-serif; white-space: nowrap; padding-top: 4px; color: #444; }
.left b { font-weight: 400; color: #111; letter-spacing: 0.100px; }
.apps3 { display: flex; justify-content: flex-end; gap: 12.500px; margin-top: 3px; }
.apps3 svg { width: 9px; height: 9px; }
.biglogo { width: 47px; height: 42px; margin: 1px 0 0 24px; }
.right { padding: 9px 0 0 23px; font: 400 7.950px/13px "Liberation Sans", "Noto Sans CJK KR", sans-serif; color: #444; white-space: nowrap; }
.right b { font-weight: 400; color: #111; letter-spacing: 0.200px; }
.right-row { display: flex; align-items: center; height: 13px; gap: 4px; }
.right .apps3 { justify-content: flex-start; margin-top: 2px; }
.apps3 span { width: 9px; height: 9px; color: #fff; font: 7px/9px "Liberation Sans", sans-serif; text-align: center; }
.w { background: #587dbf; } .xl { background: #479651; } .pp { background: #df7446; }
.drag { margin-top: 20px; padding-left: 151px; font: 400 8.050px/14px "Noto Sans CJK KR", sans-serif; color: #666; white-space: nowrap; }
.f-new { left: 3px; top: 81px; width: 90px; height: 31px; }
.w-new { left: 92px; top: 96px; width: 22px; }
.n-new { left: 111px; top: 81px; }

/* New-item menu */
.popup { position: absolute; left: 5px; top: 84px; width: 172px; height: 172px; padding-top: 8px; background: #fff; border-radius: 3px; box-shadow: 0 2px 5px rgba(0,0,0,.4); }
.popup li { display: flex; align-items: center; height: 17.200px; padding: 0 19px 0 14px; font: 400 8px/12px "Roboto", "Noto Sans CJK KR", sans-serif; color: #333; white-space: nowrap; }
.popup li.hot { height: 18px; background: #ededee; }
.popup li.sep { height: 1px; margin: 4px 0 4px; background: #e6e6e8; }
.popup li.sep ~ li.sep { margin: 3px 0 4px; }
.pi { width: 11px; height: 11px; margin-right: 10px; color: #555; flex: none; }
.pi.sq { width: 10px; height: 10px; margin: 0 11px 0 0; }
.popup li span { flex: 1; }
.chev { width: 9px; height: 9px; color: #555; }
.f-folder { left: 5px; top: 92px; width: 173px; height: 18px; }
.w-folder { left: 177px; top: 100px; width: 22px; }
.n-folder { left: 197px; top: 85px; }

/* Dialog */
.dialog { width: 366px; height: 167px; padding: 18px 20px 0; }
.dlg-head { display: flex; justify-content: space-between; align-items: center; height: 26px; padding: 0 5px 0 1px; font: 350 19.500px/26px "Noto Sans CJK KR", sans-serif; color: #222; }
.dlg-head svg { color: #555; }
.dlg-input { display: flex; height: 27px; margin-top: 21px; border: 1px solid #7f9ccc; }
.dlg-value { width: 55px; height: 27px; margin: -1px 0 0 -1px; border: 2px solid #d8141d; text-align: center; font: 400 12.500px/23px "Noto Sans CJK KR", sans-serif; color: #444; }
.dlg-foot { display: flex; align-items: center; justify-content: flex-end; margin-top: 22px; padding-right: 7px; font: 400 12.500px/28px "Noto Sans CJK KR", sans-serif; color: #444; }
.cancel { margin-right: 33px; }
.make { width: 70px; height: 30px; border: 2px solid #d8141d; background: #5b7fc1; color: #fff; text-align: center; line-height: 26px; }
.w-in { left: 75px; top: 78px; width: 26px; }
.w-make { left: 337px; top: 129px; width: 26px; }
.n-in { left: 100px; top: 60px; width: 79px; }
.n-make { left: 361px; top: 111px; width: 79px; }
```
